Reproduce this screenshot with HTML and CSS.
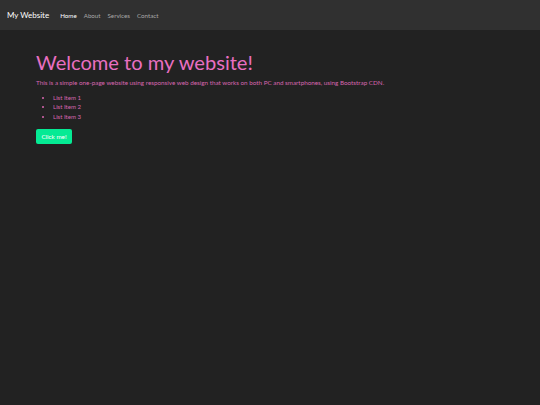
FILE: index.html
```html
<!DOCTYPE html>
<html>
<head>
<meta charset="utf-8">
<link rel="stylesheet" href="styles.css">
</head>
<body>
<nav class="navbar">
  <span class="brand">My Website</span>
  <ul class="nav">
    <li class="active">Home</li>
    <li>About</li>
    <li>Services</li>
    <li>Contact</li>
  </ul>
</nav>
<main class="container">
  <h1>Welcome to my website!</h1>
  <p>This is a simple one-page website using responsive web design that works on both PC and smartphones, using Bootstrap CDN.</p>
  <ul class="items">
    <li>List Item 1</li>
    <li>List Item 2</li>
    <li>List Item 3</li>
  </ul>
  <button class="btn">Click me!</button>
</main>
</body>
</html>
```
FILE: styles.css
```css
html, body {
  margin: 0;
  padding: 0;
  background: #222222;
  font-family: Lato, "Open Sans", sans-serif;
  color: #e96fc1;
  height: 100%;
}
.navbar {
  height: 30px;
  background: #303030;
  display: flex;
  align-items: center;
  padding: 0 7px;
  box-sizing: border-box;
}
.brand {
  color: #ffffff;
  font-size: 8px;
  margin-right: 11px;
}
.nav {
  list-style: none;
  margin: 0;
  padding: 0;
  display: flex;
  gap: 7px;
  font-size: 6.2px;
  color: #a8a8a8;
}
.nav .active {
  color: #ffffff;
}
.container {
  padding: 19.5px 36px;
}
h1 {
  font-weight: 400;
  font-size: 20.1px;
  margin: 0 0 4px;
  line-height: 1.2;
}
p {
  font-size: 6.3px;
  margin: 0 0 6px;
  line-height: 9px;
  color: #d866b0;
}
.items {
  font-size: 6.1px;
  margin: 0 0 8px;
  padding-left: 17px;
  line-height: 9.5px;
  color: #d866b0;
}
.btn {
  display: block;
  background: #05ea94;
  color: #ffffff;
  border: none;
  border-radius: 2px;
  font-family: Lato, sans-serif;
  font-size: 6.3px;
  width: 36px;
  height: 15px;
  padding: 0;
}
```
